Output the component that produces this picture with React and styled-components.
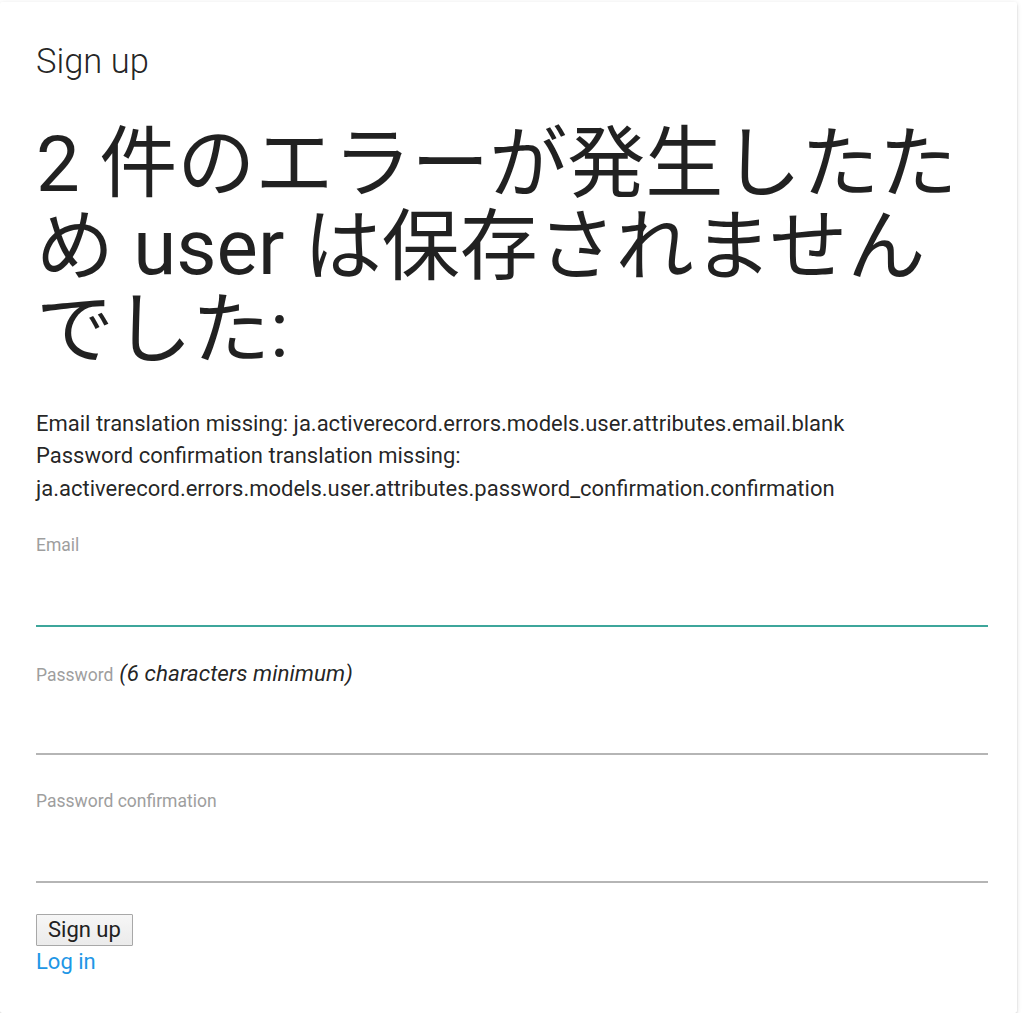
import styled, { createGlobalStyle } from 'styled-components';

const GlobalStyle = createGlobalStyle`
  body {
    margin: 0;
    background: #fff;
    font-family: Roboto, "Noto Sans CJK JP", sans-serif;
    color: rgba(0, 0, 0, 0.87);
  }
`;

// Card wrapping the whole form
const Card = styled.div`
  box-sizing: border-box;
  width: 1017px;
  min-height: 1011px;
  margin-top: 2px;
  padding: 38px 29px 35px 36px;
  background: #fff;
  border-radius: 2px;
  box-shadow: 0 2px 2px 0 rgba(0, 0, 0, 0.14), 0 1px 5px 0 rgba(0, 0, 0, 0.12),
    0 3px 1px -2px rgba(0, 0, 0, 0.2);
`;

const Title = styled.h4`
  margin: 0;
  font-size: 34.5px;
  font-weight: 300;
  line-height: 42px;
`;

const ErrorHeading = styled.h1`
  margin: 41px 0 0;
  font-size: 78px;
  font-weight: 400;
  line-height: 83px;
`;

const ErrorList = styled.ul`
  margin: 36px 0 0;
  padding: 0;
  list-style: none;
  font-size: 22px;
  line-height: 32.4px;
`;

const Form = styled.form`
  margin-top: 29.5px;
  display: flex;
  flex-direction: column;
  gap: 36px;
`;

const Field = styled.div`
  display: flex;
  flex-direction: column;
`;

const LabelRow = styled.div`
  height: 20px;
  display: flex;
  align-items: baseline;
  gap: 6px;
  white-space: nowrap;
`;

const Label = styled.label`
  font-size: 17.5px;
  line-height: 20px;
  color: #9e9e9e;
`;

const Hint = styled.em`
  font-size: 22.5px;
  line-height: 20px;
  color: rgba(0, 0, 0, 0.87);
`;

const Input = styled.input`
  box-sizing: content-box;
  height: 70px;
  padding: 0;
  margin: 0;
  border: none;
  border-bottom: 2px solid ${(p) => (p.$active ? '#3ea69b' : '#b5b5b5')};
  background: transparent;
  font-family: inherit;
  font-size: 22px;
  outline: none;
`;

const Actions = styled.div`
  margin-top: 31px;
  display: flex;
  flex-direction: column;
  align-items: flex-start;
`;

const Button = styled.button`
  box-sizing: border-box;
  height: 32px;
  padding: 0 11px;
  font-family: inherit;
  font-size: 22px;
  color: #212121;
  background: linear-gradient(#f6f6f6, #ebebeb);
  border: 1.5px solid #a8a8a8;
  border-radius: 1px;
`;

const LoginLink = styled.a`
  font-size: 22px;
  line-height: 32.4px;
  color: #2196e6;
  text-decoration: none;
`;

const errors = [
  'Email translation missing: ja.activerecord.errors.models.user.attributes.email.blank',
  'Password confirmation translation missing: ja.activerecord.errors.models.user.attributes.password_confirmation.confirmation',
];

export default function App() {
  return (
    <>
      <GlobalStyle />
      <Card>
        <Title>Sign up</Title>
        <ErrorHeading>2 件のエラーが発生したため user は保存されませんでした:</ErrorHeading>
        <ErrorList>
          {errors.map((e) => (
            <li key={e}>{e}</li>
          ))}
        </ErrorList>
        <Form onSubmit={(e) => e.preventDefault()}>
          <Field>
            <LabelRow>
              <Label>Email</Label>
            </LabelRow>
            <Input type="email" $active />
          </Field>
          <Field>
            <LabelRow>
              <Label>Password</Label>
              <Hint>(6 characters minimum)</Hint>
            </LabelRow>
            <Input type="password" />
          </Field>
          <Field>
            <LabelRow>
              <Label>Password confirmation</Label>
            </LabelRow>
            <Input type="password" />
          </Field>
        </Form>
        <Actions>
          <Button type="button">Sign up</Button>
          <LoginLink href="#">Log in</LoginLink>
        </Actions>
      </Card>
    </>
  );
}
